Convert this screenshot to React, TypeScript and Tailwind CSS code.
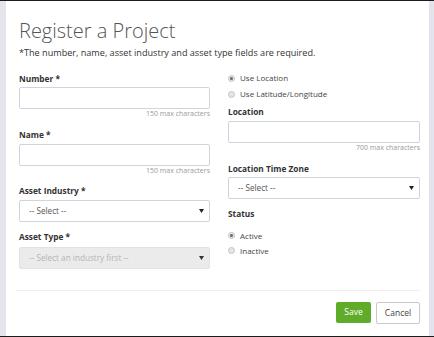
import React from "react";

const font = { fontFamily: '"Open Sans", "Liberation Sans", sans-serif' };

function Label({ children }: { children: React.ReactNode }) {
  return <div className="text-[8.3px] leading-[12px] font-bold text-[#333]">{children}</div>;
}

function Input() {
  return <div className="h-[22px] w-full rounded-[2px] border border-[#cdd6df] bg-white" />;
}

function Helper({ children }: { children: React.ReactNode }) {
  return <div className="text-right text-[7px] leading-[10px] text-[#999]">{children}</div>;
}

function Select({ text, disabled }: { text: string; disabled?: boolean }) {
  return (
    <div
      className={`flex h-[22px] w-full items-center justify-between rounded-[2px] border pl-[9px] pr-[5px] ${
        disabled ? "border-[#e2e2e2] bg-[#ebebeb] text-[#b5b5b5]" : "border-[#cdd6df] bg-white text-[#555]"
      }`}
    >
      <span className="text-[8.2px] leading-[12px]">{text}</span>
      <svg width="5" height="4" viewBox="0 0 5 4">
        <path d="M0 0 L5 0 L2.5 4 Z" fill={disabled ? "#333" : "#222"} />
      </svg>
    </div>
  );
}

function Radio({ label, checked, h }: { label: string; checked?: boolean; h: string }) {
  return (
    <div className={`flex items-center ${h}`}>
      <span className="flex h-[7px] w-[7px] items-center justify-center rounded-full border border-[#c4c4c4] bg-[#e6e6e6]">
        {checked && <span className="h-[3px] w-[3px] rounded-full bg-[#666]" />}
      </span>
      <span className="ml-[5px] text-[8px] leading-[12px] text-[#444]">{label}</span>
    </div>
  );
}

export default function App() {
  return (
    <div className="flex h-[337px] w-[434px] border-y border-[#1c1c1c] bg-white" style={font}>
      <div className="w-[6px] bg-[#e4e4ec]" />
      <div className="flex flex-1 flex-col pl-[13px] pr-[9px] pt-[15px]">
        <h1 className="text-[20px] font-light leading-[30px] text-[#555]">Register a Project</h1>
        <p className="text-[9.1px] leading-[13px] text-[#333]">
          *The number, name, asset industry and asset type fields are required.
        </p>
        <div className="mt-[14px] grid grid-cols-[191px_192px] gap-x-[18px]">
          <div className="flex flex-col">
            <Label>Number *</Label>
            <div className="mt-[2px]">
              <Input />
            </div>
            <Helper>150 max characters</Helper>
            <div className="mt-[10px]">
              <Label>Name *</Label>
            </div>
            <div className="mt-[3px]">
              <Input />
            </div>
            <Helper>150 max characters</Helper>
            <div className="mt-[9px]">
              <Label>Asset Industry *</Label>
            </div>
            <div className="mt-[3px]">
              <Select text="-- Select --" />
            </div>
            <div className="mt-[9px]">
              <Label>Asset Type *</Label>
            </div>
            <div className="mt-[4px]">
              <Select text="-- Select an industry first --" disabled />
            </div>
          </div>
          <div className="flex flex-col">
            <div className="-mt-[3px]">
              <Radio label="Use Location" checked h="h-[16px]" />
              <Radio label="Use Latitude/Longitude" h="h-[16px]" />
            </div>
            <div className="mt-[4px]">
              <Label>Location</Label>
            </div>
            <div className="mt-[3px]">
              <Input />
            </div>
            <Helper>700 max characters</Helper>
            <div className="mt-[10px]">
              <Label>Location Time Zone</Label>
            </div>
            <div className="mt-[2px]">
              <Select text="-- Select --" />
            </div>
            <div className="mt-[9px]">
              <Label>Status</Label>
            </div>
            <div className="mt-[8px]">
              <Radio label="Active" checked h="h-[15px]" />
              <Radio label="Inactive" h="h-[15px]" />
            </div>
          </div>
        </div>
        <div className="-ml-[3px] mt-[21px] h-px bg-[#eeeeee]" />
        <div className="mt-[11px] flex justify-end gap-[5px]">
          <button className="h-[21px] w-[35px] rounded-[2px] bg-[#5fab2a] text-[8.5px] text-white">Save</button>
          <button className="h-[22px] w-[44px] rounded-[2px] border border-[#c9c9c9] bg-white text-[8.5px] text-[#444]">
            Cancel
          </button>
        </div>
      </div>
      <div className="w-[5px] bg-[#e4e4ec]" />
    </div>
  );
}
